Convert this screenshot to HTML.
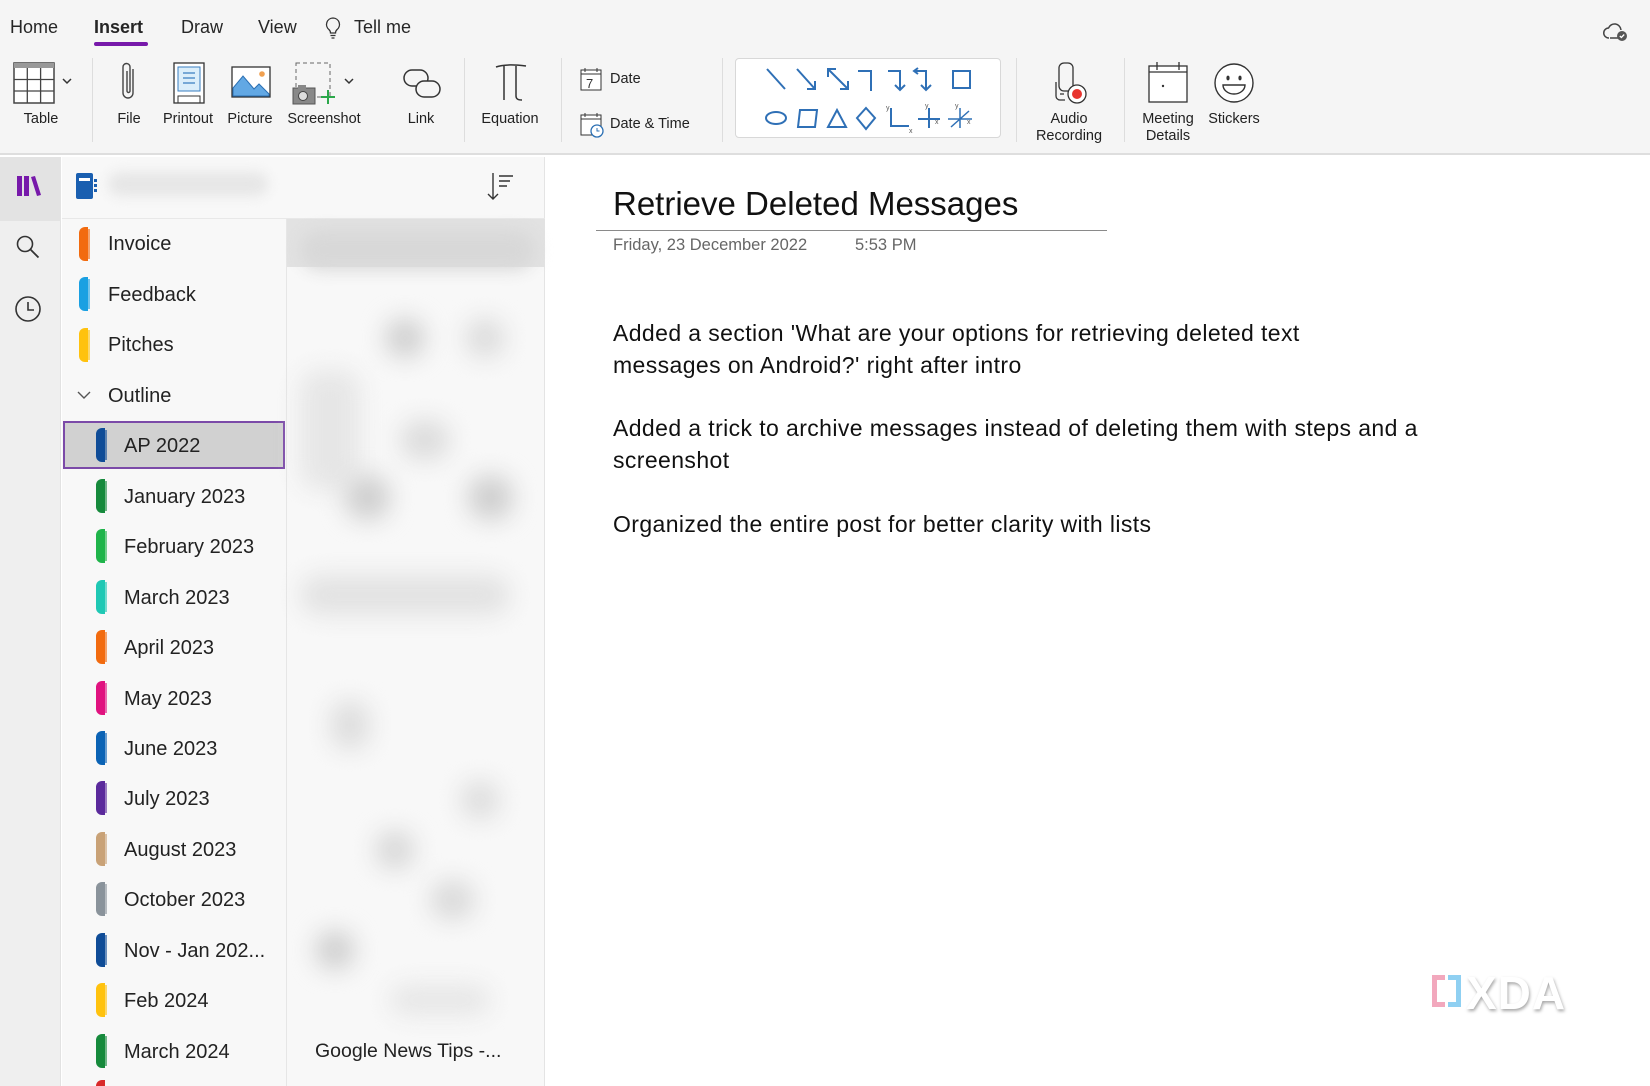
<!DOCTYPE html>
<html><head><meta charset="utf-8"><style>
*{margin:0;padding:0;box-sizing:border-box}
html,body{width:1650px;height:1086px;overflow:hidden}
body{background:#fff;font-family:"Liberation Sans",sans-serif;color:#222;position:relative}
.a{position:absolute}
.menu{font-size:18px;top:17px;color:#262626}
.lbl{position:absolute;font-size:14.5px;color:#222;text-align:center;white-space:nowrap;transform:translateX(-50%);line-height:17px}
.sep{position:absolute;top:58px;width:1px;height:84px;background:#ddd}
.sec{position:absolute;font-size:20px;color:#222;white-space:nowrap}
.tab{position:absolute;width:9px;height:34px;border-radius:6px 0 0 6px}
.tab:after{content:"";position:absolute;right:-2px;top:2px;width:3px;height:30px;background:inherit;opacity:.6}
.blob{position:absolute;background:#cfcfcf;filter:blur(12px);border-radius:20px}
.note{position:absolute;left:613px;font-family:"Liberation Sans",sans-serif;font-size:23px;letter-spacing:0.4px;color:#111;line-height:32px}
</style></head><body>
<div class="a" style="left:0;top:0;width:1650px;height:155px;background:#f5f5f5;border-bottom:2px solid #dedede"></div>
<div class="a menu" style="left:10px">Home</div>
<div class="a menu" style="left:94px;font-weight:bold">Insert</div>
<div class="a" style="left:94px;top:42px;width:54px;height:4px;border-radius:2px;background:#7719aa"></div>
<div class="a menu" style="left:181px">Draw</div>
<div class="a menu" style="left:258px">View</div>
<svg class="a" style="left:325px;top:17px" width="16" height="24" viewBox="0 0 16 24"><path d="M8 1a6.5 6.5 0 0 0-4 11.6c1 .9 1.5 2 1.5 3.4h5c0-1.4.5-2.5 1.5-3.4A6.5 6.5 0 0 0 8 1zM5.5 18.5h5M6.5 21h3" fill="none" stroke="#333" stroke-width="1.3"/></svg>
<div class="a menu" style="left:354px">Tell me</div>
<svg class="a" style="left:1602px;top:20px" width="28" height="24" viewBox="0 0 28 24"><path d="M8 18h9M7 18a5 5 0 0 1-.5-10 6.5 6.5 0 0 1 12.5 2" fill="none" stroke="#444" stroke-width="1.5"/><circle cx="20" cy="16" r="5" fill="#555"/><path d="M17.8 16l1.6 1.5 2.8-3" stroke="#fff" stroke-width="1.3" fill="none"/></svg>

<svg class="a" style="left:13px;top:62px" width="42" height="42" viewBox="0 0 42 42"><rect x="1" y="1" width="40" height="40" fill="#fff" stroke="#444" stroke-width="1.5"/><rect x="1" y="1" width="40" height="5" fill="#999"/><path d="M14.3 6v35M27.6 6v35M1 17.5h40M1 29h40" stroke="#444" stroke-width="1.3"/></svg>
<svg class="a" style="left:62px;top:78px" width="10" height="8"><path d="M1 1l4 4 4-4" stroke="#333" stroke-width="1.5" fill="none"/></svg>
<div class="lbl" style="left:41px;top:111px">Table</div>
<div class="sep" style="left:92px"></div>
<svg class="a" style="left:120px;top:61px" width="18" height="42" viewBox="0 0 18 42"><path d="M13 8v24a5 5 0 0 1-10 0V6a3.5 3.5 0 0 1 7 0v24a1.5 1.5 0 0 1-3 0V10" fill="none" stroke="#444" stroke-width="1.4"/></svg>
<div class="lbl" style="left:129px;top:111px">File</div>
<svg class="a" style="left:173px;top:62px" width="32" height="42" viewBox="0 0 32 42"><rect x="1" y="1" width="30" height="40" fill="#fff" stroke="#333" stroke-width="1.3"/><rect x="5" y="5" width="22" height="24" fill="#dbeefa" stroke="#3a7fc1"/><path d="M10 11h12M10 16h12M10 21h12" stroke="#3a7fc1" stroke-width="1.3"/><path d="M5 41v-7h22v7" fill="none" stroke="#333"/></svg>
<div class="lbl" style="left:188px;top:111px">Printout</div>
<svg class="a" style="left:231px;top:66px" width="40" height="32" viewBox="0 0 40 32"><rect x="1" y="1" width="38" height="30" fill="#fff" stroke="#333" stroke-width="1.3"/><path d="M2 30V22l10-12 11 13 5-5 10 10v2z" fill="#62a8e4" stroke="#2a6fb3"/><circle cx="31" cy="8" r="2.8" fill="#f0a050"/></svg>
<div class="lbl" style="left:250px;top:111px">Picture</div>
<svg class="a" style="left:292px;top:62px" width="46" height="44" viewBox="0 0 46 44"><rect x="4" y="1" width="34" height="34" fill="none" stroke="#666" stroke-dasharray="4 3"/><rect x="1" y="26" width="22" height="16" fill="#888" stroke="#555"/><rect x="6" y="23" width="8" height="4" fill="#888"/><circle cx="11" cy="34" r="4.5" fill="#ddd" stroke="#444"/><path d="M36 28v14M29 35h14" stroke="#2ba84a" stroke-width="2"/></svg>
<svg class="a" style="left:344px;top:78px" width="10" height="8"><path d="M1 1l4 4 4-4" stroke="#333" stroke-width="1.5" fill="none"/></svg>
<div class="lbl" style="left:324px;top:111px">Screenshot</div>
<div class="sep" style="left:464px"></div>
<svg class="a" style="left:402px;top:67px" width="40" height="34" viewBox="0 0 40 34"><rect x="2" y="3" width="24" height="16" rx="8" fill="none" stroke="#333" stroke-width="1.5"/><rect x="14" y="14" width="24" height="16" rx="8" fill="#f5f5f5" stroke="#333" stroke-width="1.5"/></svg>
<div class="lbl" style="left:421px;top:111px">Link</div>
<div class="sep" style="left:561px"></div>
<svg class="a" style="left:494px;top:63px" width="34" height="40" viewBox="0 0 34 40"><path d="M2 4c8-3 22-2 30-1M10 3v34M22 3v30c0 3 2 4 6 4" fill="none" stroke="#333" stroke-width="1.5"/></svg>
<div class="lbl" style="left:510px;top:111px">Equation</div>
<svg class="a" style="left:580px;top:67px" width="22" height="24" viewBox="0 0 22 24"><rect x="1" y="3" width="20" height="20" fill="#fff" stroke="#333"/><path d="M1 7h20M5 1v4M17 1v4" stroke="#333"/><text x="6" y="21" font-size="13" font-family="Liberation Sans" fill="#333">7</text></svg>
<div class="a" style="left:610px;top:71px;font-size:14.5px">Date</div>
<svg class="a" style="left:580px;top:112px" width="24" height="26" viewBox="0 0 24 26"><rect x="1" y="3" width="20" height="20" fill="#fff" stroke="#333"/><path d="M1 7h20M5 1v4M17 1v4" stroke="#333"/><circle cx="17" cy="19" r="6" fill="#fff" stroke="#2a6fb3" stroke-width="1.3"/><path d="M17 16v3h2.5" stroke="#2a6fb3" fill="none"/></svg>
<div class="a" style="left:610px;top:116px;font-size:14.5px">Date &amp; Time</div>
<div class="sep" style="left:722px"></div>
<div class="a" style="left:735px;top:58px;width:266px;height:80px;background:#fff;border:1px solid #d8d8d8;border-radius:4px"></div>
<svg class="a" style="left:735px;top:58px" width="266" height="80" viewBox="0 0 266 80">
<g fill="none" stroke="#2f70b6" stroke-width="2">
<path d="M32 11l18 20"/>
<path d="M62 11l18 20M80 23v8h-8"/>
<path d="M93 11l20 20M93 19v-8h8M113 23v8h-8"/>
<path d="M123 13h13v20"/>
<path d="M153 13h12v18M160 27l5 5 5-5"/>
<path d="M183 10l-4 3 4 3M179 13h12v18M186 27l5 5 5-5"/>
<rect x="218" y="13" width="17" height="17"/>
<ellipse cx="41" cy="60" rx="10" ry="6"/>
<path d="M65 52h17l-2 17H63z"/>
<path d="M102 52l9 17H93z"/>
<path d="M131 50l9 10-9 11-9-11z"/>
<path d="M156 50v18h18"/>
<path d="M183 61h22M194 50v20"/>
<path d="M213 61h24M225 50v20M216 69l18-16" stroke-width="1.5"/>
</g>
<g font-size="7" fill="#555" font-family="Liberation Sans"><text x="151" y="52">y</text><text x="174" y="75">x</text><text x="190" y="50">y</text><text x="200" y="66">x</text><text x="220" y="50">y</text><text x="232" y="66">x</text></g>
</svg>
<div class="sep" style="left:1016px"></div>
<svg class="a" style="left:1052px;top:62px" width="36" height="44" viewBox="0 0 36 44"><rect x="7" y="1" width="14" height="28" rx="5" fill="#f5f5f5" stroke="#333" stroke-width="1.3"/><path d="M4 20v14a4 4 0 0 0 4 4h5M8 32h4" fill="none" stroke="#333" stroke-width="1.3"/><circle cx="25" cy="32" r="9" fill="#fff" stroke="#333" stroke-width="1.3"/><circle cx="25" cy="32" r="5" fill="#e8342f"/></svg>
<div class="lbl" style="left:1069px;top:111px">Audio<br>Recording</div>
<div class="sep" style="left:1124px"></div>
<svg class="a" style="left:1148px;top:61px" width="40" height="42" viewBox="0 0 40 42"><rect x="1" y="5" width="38" height="36" fill="#fff" stroke="#333" stroke-width="1.3"/><path d="M1 11h38M9 1v8M31 1v8" stroke="#333" stroke-width="1.3"/><circle cx="15" cy="25" r="1.2" fill="#333"/></svg>
<div class="lbl" style="left:1168px;top:111px">Meeting<br>Details</div>
<svg class="a" style="left:1213px;top:62px" width="42" height="42" viewBox="0 0 42 42"><circle cx="21" cy="21" r="19" fill="#fff" stroke="#333" stroke-width="1.4"/><ellipse cx="15" cy="16" rx="1.6" ry="2.4" fill="#333"/><ellipse cx="27" cy="16" rx="1.6" ry="2.4" fill="#333"/><path d="M10 23h22a11 9 0 0 1-22 0z" fill="#fff" stroke="#333" stroke-width="1.4"/></svg>
<div class="lbl" style="left:1234px;top:111px">Stickers</div>

<div class="a" style="left:0;top:157px;width:61px;height:929px;background:#efefef;border-right:1px solid #e2e2e2"></div>
<div class="a" style="left:0;top:157px;width:61px;height:64px;background:#e3e3e3"></div>
<svg class="a" style="left:16px;top:174px" width="26" height="24" viewBox="0 0 26 24"><rect x="1" y="2" width="5" height="20" fill="#7719aa"/><rect x="8" y="2" width="5" height="20" fill="#7719aa"/><path d="M15 3l4-1 6 19-4 1z" fill="#7719aa"/></svg>
<svg class="a" style="left:15px;top:234px" width="26" height="26" viewBox="0 0 26 26"><circle cx="10" cy="10" r="7.5" fill="none" stroke="#333" stroke-width="1.6"/><path d="M15.5 15.5l8 8" stroke="#333" stroke-width="1.8"/></svg>
<svg class="a" style="left:14px;top:295px" width="28" height="28" viewBox="0 0 28 28"><circle cx="14" cy="14" r="12" fill="none" stroke="#333" stroke-width="1.6"/><path d="M14 7v8h6" fill="none" stroke="#333" stroke-width="1.6"/></svg>

<div class="a" style="left:62px;top:157px;width:483px;height:929px;background:#f8f8f8;border-right:1px solid #e4e4e4"></div>
<div class="a" style="left:62px;top:218px;width:483px;height:1px;background:#e8e8e8"></div>
<svg class="a" style="left:75px;top:172px" width="24" height="28" viewBox="0 0 24 28"><rect x="1" y="1" width="17" height="26" rx="2" fill="#1a5fb0"/><rect x="4" y="6" width="11" height="3" fill="#fff"/><rect x="19" y="7" width="3" height="3" fill="#1a5fb0"/><rect x="19" y="12" width="3" height="3" fill="#1a5fb0"/><rect x="19" y="17" width="3" height="3" fill="#1a5fb0"/></svg>
<div class="blob" style="left:108px;top:172px;width:160px;height:24px;background:#e6e6e6;filter:blur(6px)"></div>
<svg class="a" style="left:487px;top:172px" width="28" height="30" viewBox="0 0 28 30"><path d="M6 1v26M1 22l5 5 5-5M12 4h14M12 9h11M12 14h8" fill="none" stroke="#333" stroke-width="1.4"/></svg>

<div class="a" style="left:286px;top:219px;width:1px;height:867px;background:#e6e6e6"></div>
<div class="tab" style="left:79px;top:227px;background:#f26b0f"></div><div class="sec" style="left:108px;top:233px">Invoice</div>
<div class="tab" style="left:79px;top:277px;background:#1aa0e2"></div><div class="sec" style="left:108px;top:284px">Feedback</div>
<div class="tab" style="left:79px;top:328px;background:#ffc20e"></div><div class="sec" style="left:108px;top:334px">Pitches</div>
<svg class="a" style="left:77px;top:390px" width="14" height="10"><path d="M1 2l6 6 6-6" stroke="#555" stroke-width="1.4" fill="none"/></svg>
<div class="sec" style="left:108px;top:385px">Outline</div>
<div class="a" style="left:63px;top:421px;width:222px;height:48px;background:#d1d1d1;border:2px solid #7b4aa8"></div>
<div class="tab" style="left:96px;top:428px;background:#0f4c97"></div><div class="sec" style="left:124px;top:435px">AP 2022</div>
<div class="tab" style="left:96px;top:479px;background:#168a3c"></div><div class="sec" style="left:124px;top:486px">January 2023</div>
<div class="tab" style="left:96px;top:529px;background:#1fb44a"></div><div class="sec" style="left:124px;top:536px">February 2023</div>
<div class="tab" style="left:96px;top:580px;background:#1fc8b4"></div><div class="sec" style="left:124px;top:587px">March 2023</div>
<div class="tab" style="left:96px;top:630px;background:#f26b0f"></div><div class="sec" style="left:124px;top:637px">April 2023</div>
<div class="tab" style="left:96px;top:681px;background:#e0127f"></div><div class="sec" style="left:124px;top:688px">May 2023</div>
<div class="tab" style="left:96px;top:731px;background:#0b63b5"></div><div class="sec" style="left:124px;top:738px">June 2023</div>
<div class="tab" style="left:96px;top:781px;background:#5b2a9c"></div><div class="sec" style="left:124px;top:788px">July 2023</div>
<div class="tab" style="left:96px;top:832px;background:#c9a277"></div><div class="sec" style="left:124px;top:839px">August 2023</div>
<div class="tab" style="left:96px;top:882px;background:#8a939b"></div><div class="sec" style="left:124px;top:889px">October 2023</div>
<div class="tab" style="left:96px;top:933px;background:#0f4c97"></div><div class="sec" style="left:124px;top:940px">Nov - Jan 202...</div>
<div class="tab" style="left:96px;top:983px;background:#ffc20e"></div><div class="sec" style="left:124px;top:990px">Feb 2024</div>
<div class="tab" style="left:96px;top:1034px;background:#168a3c"></div><div class="sec" style="left:124px;top:1041px">March 2024</div>
<div class="a" style="left:96px;top:1080px;width:9px;height:6px;background:#d92a2a;border-radius:6px 0 0 0"></div>

<div class="a" style="left:287px;top:219px;width:258px;height:48px;background:#e2e2e2"></div>
<div class="blob" style="left:300px;top:230px;width:235px;height:40px;background:#d8d8d8;filter:blur(8px)"></div>
<div class="blob" style="left:385px;top:318px;width:40px;height:40px"></div>
<div class="blob" style="left:465px;top:318px;width:40px;height:40px;background:#dcdcdc"></div>
<div class="blob" style="left:300px;top:370px;width:60px;height:120px;background:#e6e6e6"></div>
<div class="blob" style="left:400px;top:420px;width:50px;height:40px;background:#dcdcdc"></div>
<div class="blob" style="left:345px;top:475px;width:45px;height:45px"></div>
<div class="blob" style="left:468px;top:475px;width:45px;height:45px"></div>
<div class="blob" style="left:300px;top:575px;width:210px;height:40px;background:#e2e2e2"></div>
<div class="blob" style="left:330px;top:700px;width:40px;height:50px;background:#dedede"></div>
<div class="blob" style="left:460px;top:780px;width:40px;height:40px;background:#dedede"></div>
<div class="blob" style="left:375px;top:830px;width:40px;height:40px;background:#d8d8d8"></div>
<div class="blob" style="left:430px;top:880px;width:45px;height:40px;background:#dadada"></div>
<div class="blob" style="left:315px;top:930px;width:40px;height:40px"></div>
<div class="blob" style="left:390px;top:985px;width:100px;height:30px;background:#e6e6e6"></div>
<div class="a" style="left:315px;top:1040px;font-size:19.5px;color:#222">Google News Tips -...</div>

<div class="a" style="left:613px;top:185px;font-size:33px;color:#111">Retrieve Deleted Messages</div>
<div class="a" style="left:596px;top:230px;width:511px;height:1px;background:#8a8a8a"></div>
<div class="a" style="left:613px;top:236px;font-size:16.5px;color:#666">Friday, 23 December 2022</div>
<div class="a" style="left:855px;top:236px;font-size:16.5px;color:#666">5:53 PM</div>
<div class="note" style="top:317px">Added a section 'What are your options for retrieving deleted text<br>messages on Android?' right after intro</div>
<div class="note" style="top:412px">Added a trick to archive messages instead of deleting them with steps and a<br>screenshot</div>
<div class="note" style="top:508px">Organized the entire post for better clarity with lists</div>

<div class="a" style="left:1432px;top:975px;width:13px;height:32px;border:5px solid #f2a8bd;border-right:none"></div>
<div class="a" style="left:1448px;top:975px;width:13px;height:32px;border:5px solid #8fd0f2;border-left:none"></div>
<div class="a" style="left:1466px;top:966px;font-size:46px;color:#fff;font-weight:bold;letter-spacing:1px;text-shadow:1px 2px 3px rgba(0,0,0,.35)">XDA</div>
</body></html>
